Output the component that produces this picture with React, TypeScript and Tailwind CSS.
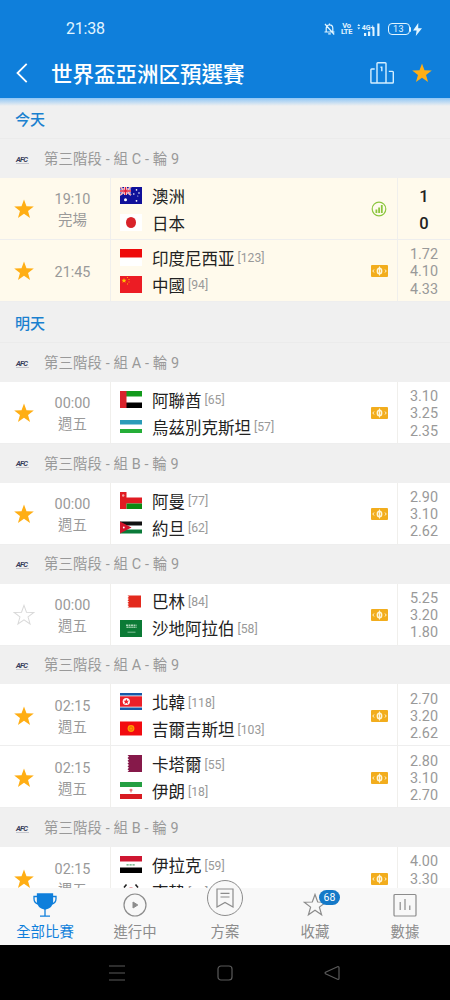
import type { ReactNode } from 'react';

type Team = { name: string; flag: string; rank?: number; score?: number };
type Match = { time: string; status?: string; starred?: boolean; live?: boolean; odds?: string[]; home: Team; away: Team };
type Group = { league: string; matches: Match[] };
type Day = { title: string; today?: boolean; groups: Group[] };

const days: Day[] = [
  {
    title: '今天',
    today: true,
    groups: [
      {
        league: '第三階段 - 組 C - 輪 9',
        matches: [
          {
            time: '19:10',
            status: '完場',
            starred: true,
            live: true,
            home: { name: '澳洲', flag: 'au', score: 1 },
            away: { name: '日本', flag: 'jp', score: 0 },
          },
          {
            time: '21:45',
            starred: true,
            odds: ['1.72', '4.10', '4.33'],
            home: { name: '印度尼西亚', flag: 'id', rank: 123 },
            away: { name: '中國', flag: 'cn', rank: 94 },
          },
        ],
      },
    ],
  },
  {
    title: '明天',
    groups: [
      {
        league: '第三階段 - 組 A - 輪 9',
        matches: [
          {
            time: '00:00',
            status: '週五',
            starred: true,
            odds: ['3.10', '3.25', '2.35'],
            home: { name: '阿聯酋', flag: 'ae', rank: 65 },
            away: { name: '烏茲別克斯坦', flag: 'uz', rank: 57 },
          },
        ],
      },
      {
        league: '第三階段 - 組 B - 輪 9',
        matches: [
          {
            time: '00:00',
            status: '週五',
            starred: true,
            odds: ['2.90', '3.10', '2.62'],
            home: { name: '阿曼', flag: 'om', rank: 77 },
            away: { name: '約旦', flag: 'jo', rank: 62 },
          },
        ],
      },
      {
        league: '第三階段 - 組 C - 輪 9',
        matches: [
          {
            time: '00:00',
            status: '週五',
            odds: ['5.25', '3.20', '1.80'],
            home: { name: '巴林', flag: 'bh', rank: 84 },
            away: { name: '沙地阿拉伯', flag: 'sa', rank: 58 },
          },
        ],
      },
      {
        league: '第三階段 - 組 A - 輪 9',
        matches: [
          {
            time: '02:15',
            status: '週五',
            starred: true,
            odds: ['2.70', '3.20', '2.62'],
            home: { name: '北韓', flag: 'kp', rank: 118 },
            away: { name: '吉爾吉斯坦', flag: 'kg', rank: 103 },
          },
          {
            time: '02:15',
            status: '週五',
            starred: true,
            odds: ['2.80', '3.10', '2.70'],
            home: { name: '卡塔爾', flag: 'qa', rank: 55 },
            away: { name: '伊朗', flag: 'ir', rank: 18 },
          },
        ],
      },
      {
        league: '第三階段 - 組 B - 輪 9',
        matches: [
          {
            time: '02:15',
            status: '週五',
            starred: true,
            odds: ['4.00', '3.30', '1.95'],
            home: { name: '伊拉克', flag: 'iq', rank: 59 },
            away: { name: '南韓', flag: 'kr', rank: 23 },
          },
        ],
      },
    ],
  },
];

// every flag is drawn on a 22x17 canvas
const flags: Record<string, ReactNode> = {
  au: (
    <>
      <path fill="#10109a" d="M0 0h22v17H0z" />
      <path stroke="#fff" strokeWidth="1.800" d="M0 0l11 8M11 0L0 8" />
      <path stroke="#fff" strokeWidth="3" d="M5.500 0v8M0 4h11" />
      <path stroke="#e0203a" strokeWidth="1.600" d="M5.500 0v8M0 4h11" />
      <path stroke="#e0203a" strokeWidth=".6" d="M0 0l11 8M11 0L0 8" />
      <g fill="#fff">
        <circle cx="5.500" cy="12.700" r="1.500" />
        <circle cx="16.500" cy="2.900" r=".8" />
        <circle cx="13.800" cy="7" r=".8" />
        <circle cx="19" cy="6" r=".8" />
        <circle cx="16.500" cy="13.800" r=".9" />
        <circle cx="17.800" cy="9" r=".5" />
      </g>
    </>
  ),
  jp: (
    <>
      <path fill="#fff" d="M0 0h22v17H0z" />
      <ellipse cx="11" cy="8.500" rx="5" ry="5.600" fill="#d8232a" />
    </>
  ),
  id: (
    <>
      <path fill="#fff" d="M0 0h22v17H0z" />
      <path fill="#ee0a0a" d="M0 0h22v8.500H0z" />
    </>
  ),
  cn: (
    <>
      <path fill="#ec1c24" d="M0 0h22v17H0z" />
      <path fill="#ffc400" d="M4 2l.7 1.700 1.800.1-1.400 1.100.5 1.800L4 5.700 2.400 6.700l.5-1.800L1.500 3.800l1.800-.1z" />
      <path fill="#ffb000" d="M7 1h1v1H7zM8.500 3h1v1h-1zM8.500 5.500h1v1h-1zM7 7.500h1v1H7z" />
    </>
  ),
  ae: (
    <>
      <path fill="#fff" d="M0 0h22v17H0z" />
      <path fill="#129a1c" d="M6 0h16v5.500H6z" />
      <path fill="#000" d="M6 11.500h16V17H6z" />
      <path fill="#d8222b" d="M0 0h6.500v17H0z" />
    </>
  ),
  uz: (
    <>
      <path fill="#fff" d="M0 2h22v13H0z" />
      <path fill="#2a9bb8" d="M0 2h22v4.500H0z" />
      <path fill="#25ae38" d="M0 11h22v4H0z" />
    </>
  ),
  om: (
    <>
      <path fill="#fff" d="M0 0h22v6H0z" />
      <path fill="#e01b22" d="M0 0h6.500v17H0zM6 5.500h16v6H6z" />
      <path fill="#0c8a12" d="M6.500 11.500h15.500V17H6.500z" />
      <circle cx="3.200" cy="3.500" r="1.200" fill="#f7a5a5" />
    </>
  ),
  jo: (
    <>
      <path fill="#fff" d="M0 2.500h22v12H0z" />
      <path fill="#111" d="M0 2.500h22v4H0z" />
      <path fill="#0b7a39" d="M0 10.500h22v4H0z" />
      <path fill="#d3142b" d="M0 2.500l11.500 6-11.500 6z" />
      <circle cx="3.800" cy="8.500" r=".9" fill="#fff" />
    </>
  ),
  bh: (
    <>
      <path fill="#fff" d="M0 2h22v13H0z" />
      <path fill="#e32a1e" d="M7.500 2.500H21v12H7.500l1.500-1.200-1.500-1.200 1.500-1.200-1.500-1.200L9 8.500 7.500 7.300 9 6.100 7.500 4.900 9 3.700z" />
    </>
  ),
  sa: (
    <>
      <path fill="#0b7a35" d="M0 0h22v17H0z" />
      <path stroke="#a8d5b5" strokeWidth="1.600" strokeDasharray="2 .5" d="M6 5.200h10.500" />
      <path stroke="#a8d5b5" strokeWidth="1.600" strokeDasharray="1.400 .5" d="M6.500 7.200h10" />
      <path stroke="#8fc8a1" strokeWidth=".9" d="M7.500 12.200h8" />
    </>
  ),
  kp: (
    <>
      <path fill="#1659a8" d="M0 0h22v17H0z" />
      <path fill="#fff" d="M0 2.500h22v12H0z" />
      <path fill="#ec2029" d="M0 3.300h22v10.400H0z" />
      <circle cx="6.300" cy="8.500" r="3.600" fill="#fff" />
      <path fill="#ec2029" d="M6.300 5.700l.8 2 2 .1-1.500 1.300.5 2-1.800-1.100-1.800 1.100.5-2-1.500-1.300 2-.1z" />
    </>
  ),
  kg: (
    <>
      <path fill="#f20b10" d="M0 1.500h22v14H0z" />
      <circle cx="11" cy="8.500" r="3.400" fill="#ff9a00" />
      <circle cx="11" cy="8.500" r="1.700" fill="none" stroke="#f0520c" strokeWidth=".7" />
    </>
  ),
  qa: (
    <>
      <path fill="#fff" d="M0 0h22v17H0z" />
      <path fill="#86194a" d="M7.500 0H22v17H7.500L9 15.600l-1.500-1.400L9 12.800l-1.500-1.400L9 10 7.500 8.600 9 7.200 7.500 5.800 9 4.400 7.500 3 9 1.500z" />
    </>
  ),
  ir: (
    <>
      <path fill="#fff" d="M0 0h22v17H0z" />
      <path fill="#249f42" d="M0 0h22v5H0z" />
      <path fill="#d81b22" d="M0 12h22v5H0z" />
      <path stroke="#e0464c" d="M11 6.800v3.600M9.500 8h3" />
    </>
  ),
  iq: (
    <>
      <path fill="#fff" d="M0 0h22v17H0z" />
      <path fill="#ce1631" d="M0 0h22v5.500H0z" />
      <path fill="#000" d="M0 11.500h22V17H0z" />
      <path stroke="#5ba574" strokeWidth="1.300" strokeDasharray="2.200 .8" d="M6.500 8.900h9" />
    </>
  ),
  kr: (
    <>
      <path fill="#fff" d="M0 0h22v17H0z" />
      <path stroke="#222" strokeWidth="1.600" d="M4 4.500L6.500 1.500M15.500 1.500L18 4.500M4 12.500l2.500 3M15.500 15.500l2.500-3" />
      <path fill="#cd2e3a" d="M7 8.500a4 4 0 0 1 8 0z" />
      <path fill="#0047a0" d="M7 8.500a4 4 0 0 0 8 0z" />
    </>
  ),
};

const STAR = 'M12 1.500l2.700 7.500 8 .2-6.300 4.900 2.200 7.700-6.600-4.500-6.600 4.500 2.200-7.700L1.300 9.200l8-.2z';

const Star = ({ filled = true, size = 22 }: { filled?: boolean; size?: number }) => (
  <svg width={size} height={size} viewBox="0 0 24 24" fill={filled ? '#ffae14' : 'none'} stroke={filled ? 'none' : '#d9d9d9'} strokeWidth="1.100">
    <path d={STAR} />
  </svg>
);

const StatusBar = () => (
  <div className="flex h-[50px] items-center justify-between pt-[8px] pr-[28px] pl-[66px] text-[#e2f5ff]">
    <span className="text-[16px] tracking-[-0.2px]">21:38</span>
    <div className="flex items-center">
      {/* muted bell */}
      <svg width="11" height="12" viewBox="0 0 11 12" fill="none" stroke="currentColor" strokeWidth="1.200">
        <path d="M2.200 8.800V5.200a3.300 3.300 0 0 1 6.600 0v3.600M.5 9h10M4.200 10.800h2.600M5.500 2V.5M1 1l9.200 10.500" />
      </svg>
      <div className="ml-[7px] flex w-[10px] flex-col items-center text-[7.5px] leading-[6.5px] font-bold tracking-[-0.3px]">
        <span>Vo</span>
        <span>LTE</span>
      </div>
      <svg className="ml-[5px]" width="23" height="13" viewBox="0 0 23 13" fill="currentColor">
        <path d="M.3 3L1.800 1l1.500 2zM.3 4.500h3L1.800 6.500zM7 10h2.200v3H7zM11 8.500h2.200V13H11zM15.500 5h2V13h-2zM20.300.5h2.200V13h-2.200z" />
        <text x="4.800" y="6.500" fontSize="7" fontWeight="bold">
          4G+
        </text>
      </svg>
      <div className="ml-[8px] flex h-[12px] w-[22px] items-center justify-center rounded-[4px] border border-current text-[9px] leading-none tracking-[0.5px]">
        13
      </div>
      <div className="h-[5px] w-[1.5px] rounded-r bg-current" />
      <svg className="ml-[2px]" width="9" height="13" viewBox="0 0 9 13" fill="currentColor">
        <path d="M5.300 0L0 7.500h3.600L2.800 13 9 5.200H5.200z" />
      </svg>
    </div>
  </div>
);

const Header = () => (
  <header className="h-[98px] shrink-0 bg-[#0f7fdb]">
    <StatusBar />
    <div className="flex h-[46px] items-center pr-[17px] pl-[16px] text-white">
      <svg width="12" height="20" viewBox="0 0 12 20" fill="none" stroke="currentColor" strokeWidth="1.800">
        <path d="M10.700.8L1.500 10l9.200 9.200" />
      </svg>
      <h1 className="ml-[23px] flex-1 pt-[3px] text-[21.5px] leading-none font-medium whitespace-nowrap">世界盃亞洲区預選賽</h1>
      <svg width="24" height="22" viewBox="0 0 24 22" fill="none" stroke="#d5efff" strokeWidth="1.400">
        <path d="M7 21V1.500q0-.8.8-.8h7.400q.8 0 .8.800V21M4.700 7H1.700q-.8 0-.8.8v12.400q0 .8.800.8h20.800q.8 0 .8-.8v-10q0-.8-.8-.8h-3.700M10.500 5.300h1.300v4" />
      </svg>
      <div className="ml-[17px]">
        <Star />
      </div>
    </div>
  </header>
);

const LeagueRow = ({ name }: { name: string }) => (
  <div className="flex h-[38.8px] items-center pt-[2px] pl-[16px] text-[14.4px] tracking-[0.12px] text-[#999]">
    <div className="w-[28px] text-[#3a3e5c]">
      <div className="w-[13px] border-b border-[#c4c6cd] text-[7.5px] leading-[7px] font-bold tracking-[-0.8px] italic">AFC</div>
    </div>
    <span>{name}</span>
  </div>
);

const TeamRow = ({ team }: { team: Team }) => (
  <div className="flex h-[27px] items-center">
    <svg width="22" height="17" viewBox="0 0 22 17">
      {flags[team.flag]}
    </svg>
    <span className="ml-[10px] pt-[5px] text-[16.5px] leading-none whitespace-nowrap text-[#222]">{team.name}</span>
    {team.rank && <span className="ml-[3px] pt-[2px] text-[12.2px] leading-none text-[#999]">[{team.rank}]</span>}
  </div>
);

const LiveIcon = () => (
  <svg width="16" height="16" viewBox="0 0 16 16">
    <circle cx="8" cy="8" r="6.800" fill="none" stroke="#8cc63f" strokeWidth="1.200" />
    <path fill="#8cc63f" d="M4.500 8.500h1.800V12H4.500zM7.200 6.500H9V12H7.200zM9.900 4h1.800v8H9.900z" />
  </svg>
);

const OddsIcon = () => (
  <svg width="17" height="12" viewBox="0 0 17 12">
    <rect width="17" height="12" rx="1" fill="#f2ad1d" />
    <ellipse cx="8.500" cy="6" rx="2.100" ry="2.700" fill="none" stroke="#fff6d8" strokeWidth="1.600" />
    <path stroke="#fff6d8" strokeWidth="1" fill="none" d="M8.500 1.500v9M3 4.500L1.800 6 3 7.500M14 4.500L15.200 6 14 7.500" />
  </svg>
);

const MatchRow = ({ match, today }: { match: Match; today?: boolean }) => (
  <div className={`flex h-[62px] border-b border-[#eee] ${today ? 'bg-[#fffaec]' : 'bg-white'}`}>
    <div className="flex w-[111px] shrink-0 items-center border-r border-[#f0efec]">
      <div className="flex w-[48px] justify-center pt-[2px]">
        <Star filled={!!match.starred} />
      </div>
      <div className="flex w-[49px] flex-col items-center pt-[4px] text-[14.4px] leading-[21px] text-[#999]">
        <span>{match.time}</span>
        {match.status && <span>{match.status}</span>}
      </div>
    </div>
    <div className="flex flex-1 flex-col justify-center pt-px pl-[9px]">
      <TeamRow team={match.home} />
      <TeamRow team={match.away} />
    </div>
    <div className="flex w-[36px] shrink-0 items-center justify-center pt-[2px]">{match.live ? <LiveIcon /> : <OddsIcon />}</div>
    <div className="flex w-[53px] shrink-0 flex-col items-center justify-center border-l border-[#f0efec] pt-[3px]">
      {match.odds ? (
        match.odds.map((odd) => (
          <span key={odd} className="text-[14.4px] leading-[17.2px] text-[#999]">
            {odd}
          </span>
        ))
      ) : (
        <>
          <span className="text-[16.5px] leading-[27px] font-medium text-[#222]">{match.home.score}</span>
          <span className="text-[16.5px] leading-[27px] font-medium text-[#222]">{match.away.score}</span>
        </>
      )}
    </div>
  </div>
);

const TabBar = () => (
  <nav className="grid h-[57px] shrink-0 grid-cols-5 bg-[#f8f8f8] text-[14.4px] leading-none text-[#8c8c8c]">
    <div className="flex flex-col items-center pt-[5px] text-[#0f7fdb]">
      <svg width="24" height="24" viewBox="0 0 24 24" fill="none" stroke="currentColor" strokeWidth="1.300">
        <path fill="currentColor" d="M4.500 1h15v7.500c0 4-3 6.500-7.500 7.500-4.500-1-7.500-3.500-7.500-7.500z" />
        <path d="M4.500 3.500H1v2.300c0 3 1.500 4.700 4.500 5.200M19.500 3.500H23v2.300c0 3-1.500 4.700-4.500 5.200M12 15v8M7 23.200h10" />
      </svg>
      <span className="mt-[9px]">全部比賽</span>
    </div>
    <div className="flex flex-col items-center pt-[5px]">
      <svg width="24" height="24" viewBox="0 0 24 24" fill="none" stroke="currentColor">
        <circle cx="12" cy="12" r="11" strokeWidth="1.200" />
        <path fill="currentColor" d="M10 9l4.800 3-4.800 3z" />
      </svg>
      <span className="mt-[9px]">進行中</span>
    </div>
    <div className="relative flex flex-col items-center pt-[38px]">
      <div className="absolute top-[-8px] flex size-[36px] items-center justify-center rounded-full border border-[#8c8c8c] bg-[#f8f8f8]">
        <svg width="18" height="20" viewBox="0 0 18 20" fill="none" stroke="currentColor" strokeWidth="1.200">
          <path d="M1 1h16v18l-8-4.500L1 19zM4.500 5.300h9M4.500 9h9" />
        </svg>
      </div>
      <span>方案</span>
    </div>
    <div className="relative flex flex-col items-center pt-[5px]">
      <svg width="24" height="24" viewBox="0 0 24 24" fill="none" stroke="currentColor" strokeWidth="1.200">
        <path d={STAR} />
      </svg>
      <span className="absolute top-[2px] left-[49px] flex h-[15px] w-[21px] items-center justify-center rounded-full bg-[#1579c8] pt-px text-[10.5px] text-white">
        68
      </span>
      <span className="mt-[9px]">收藏</span>
    </div>
    <div className="flex flex-col items-center pt-[5px]">
      <svg width="24" height="24" viewBox="0 0 24 24" fill="none" stroke="currentColor" strokeWidth="1.200">
        <rect x="1" y="1.500" width="22" height="21.500" rx="1" />
        <path d="M7.200 9v8M12 6v11M16.800 12.500V17" />
      </svg>
      <span className="mt-[9px]">數據</span>
    </div>
  </nav>
);

const SystemNav = () => (
  <div className="flex h-[55px] shrink-0 items-center justify-between bg-black pr-[110px] pl-[109px] text-[#5a5a5a]">
    <svg width="16" height="16" viewBox="0 0 16 16" fill="none" stroke="currentColor" strokeWidth="1.200">
      <path d="M0 1h16M0 8h16M0 15h16" />
    </svg>
    <svg width="16" height="16" viewBox="0 0 16 16" fill="none" stroke="currentColor" strokeWidth="1.200">
      <rect x="1" y="1" width="14" height="14" rx="3" />
    </svg>
    <svg width="16" height="16" viewBox="0 0 16 16" fill="none" stroke="currentColor" strokeWidth="1.200">
      <path d="M14 1.500q1 0 1 1v11q0 1-1 1L1.500 8.700q-.8-.7 0-1.400z" />
    </svg>
  </div>
);

const App = () => {
  return (
    <div className="flex h-[1000px] w-[450px] flex-col overflow-hidden bg-[#f0f0f0] font-[Roboto,'Noto_Sans_CJK_TC',sans-serif]">
      <Header />
      <main className="relative min-h-0 flex-1 overflow-hidden">
        <div className="absolute inset-x-0 top-0 h-[8px] bg-linear-to-b from-[#8fc6f5] to-transparent" />
        {days.map((day) => (
          <section key={day.title}>
            <h2 className="flex h-[41.2px] items-center border-b border-[#ebebeb] pt-[4px] pl-[15px] text-[15px] font-medium text-[#1a80cf]">
              {day.title}
            </h2>
            {day.groups.map((group, i) => (
              <div key={i}>
                <LeagueRow name={group.league} />
                {group.matches.map((match) => (
                  <MatchRow key={match.home.name} match={match} today={day.today} />
                ))}
              </div>
            ))}
          </section>
        ))}
      </main>
      <TabBar />
      <SystemNav />
    </div>
  );
};

export default App;
